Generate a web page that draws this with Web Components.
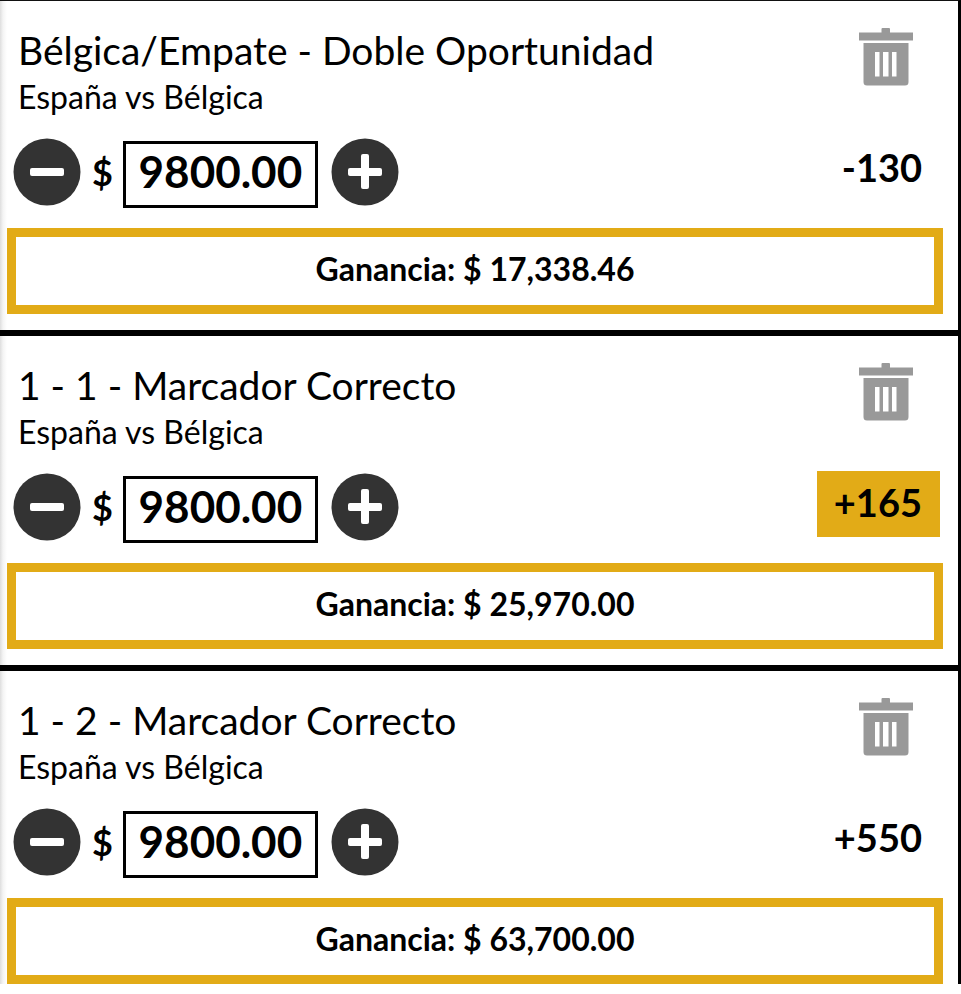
<!DOCTYPE html>
<html lang="es">
<head>
<meta charset="utf-8">
<meta name="viewport" content="width=device-width, initial-scale=1">
<title>Apuestas</title>
<style>
  body {
    min-height: 100vh;
    margin: 0;
    background: #fff;
    color: #000;
    font-family: Lato, "Open Sans", sans-serif;
  }
</style>
</head>
<body>
<bet-slip>
  <bet-card stake="9800.00" odds="-130" payout="17,338.46">
    <span slot="pick">Bélgica/Empate - Doble Oportunidad</span>
    <span slot="match">España vs Bélgica</span>
  </bet-card>
  <bet-card stake="9800.00" odds="+165" payout="25,970.00" highlight>
    <span slot="pick">1 - 1 - Marcador Correcto</span>
    <span slot="match">España vs Bélgica</span>
  </bet-card>
  <bet-card stake="9800.00" odds="+550" payout="63,700.00">
    <span slot="pick">1 - 2 - Marcador Correcto</span>
    <span slot="match">España vs Bélgica</span>
  </bet-card>
</bet-slip>

<script>
const slipTemplate = document.createElement("template");

slipTemplate.innerHTML = `
  <style>
    :host {
      display: block;
      border-top: 1px solid #111;
      border-right: 3px solid #000;
    }
    ::slotted(bet-card:not(:last-child)) {
      border-bottom: 6px solid #000;
      padding-bottom: 16px;
    }
  </style>
  <slot></slot>
`;

class BetSlip extends HTMLElement {
  constructor() {
    super();
    this.attachShadow({ mode: "open" });
    this.shadowRoot.appendChild(slipTemplate.content.cloneNode(true));
  }
}

const stepperTemplate = document.createElement("template");

stepperTemplate.innerHTML = `
  <style>
    :host {
      display: flex;
      align-items: flex-start;
    }
    button {
      width: 68px;
      height: 68px;
      padding: 0;
      border: none;
      background: none;
      cursor: pointer;
    }
    svg {
      display: block;
    }
    label {
      display: flex;
      align-items: flex-start;
      gap: 10px;
      margin: 0 13px 0 11px;
      font-size: 36px;
      font-weight: 700;
      line-height: 68px;
    }
    input {
      box-sizing: border-box;
      width: 195px;
      height: 67px;
      margin: 3px 0 0;
      padding: 0 0 8px;
      border: 3px solid #000;
      border-radius: 0;
      background: #fff;
      color: inherit;
      font: inherit;
      font-size: 44px;
      line-height: 53px;
      text-align: center;
    }
  </style>
  <button type="button" class="minus" aria-label="Menos">
    <svg width="68" height="68" viewBox="0 0 68 68">
      <circle cx="34" cy="34" r="33.5" fill="#333"/>
      <rect x="17" y="30" width="34" height="8" rx="2" fill="#fff"/>
    </svg>
  </button>
  <label><span>$</span><input type="text" inputmode="decimal" aria-label="Monto"></label>
  <button type="button" class="plus" aria-label="Más">
    <svg width="68" height="68" viewBox="0 0 68 68">
      <circle cx="34" cy="34" r="33.5" fill="#333"/>
      <rect x="17" y="30" width="34" height="8" rx="2" fill="#fff"/>
      <rect x="30" y="16" width="8" height="35" rx="2" fill="#fff"/>
    </svg>
  </button>
`;

class StakeStepper extends HTMLElement {
  constructor() {
    super();
    this.attachShadow({ mode: "open" });
    this.shadowRoot.appendChild(stepperTemplate.content.cloneNode(true));
    this.input = this.shadowRoot.querySelector("input");
    this.shadowRoot.querySelector(".minus").addEventListener("click", () => this.change(-100));
    this.shadowRoot.querySelector(".plus").addEventListener("click", () => this.change(100));
  }

  static get observedAttributes() {
    return ["value"];
  }

  attributeChangedCallback(name, oldValue, newValue) {
    this.input.value = newValue;
  }

  change(amount) {
    const next = Math.max(0, (parseFloat(this.input.value) || 0) + amount);
    this.input.value = next.toFixed(2);
  }
}

const cardTemplate = document.createElement("template");

cardTemplate.innerHTML = `
  <style>
    :host {
      display: block;
      padding: 25px 15px 0 7px;
      background: linear-gradient(to right, #dedede, #f4f4f4 3px, #fff 7px);
    }
    .top, .middle {
      display: flex;
      justify-content: space-between;
      align-items: flex-start;
    }
    .names {
      padding-left: 11px;
    }
    h2, p {
      margin: 0;
      font-weight: 400;
    }
    h2 {
      font-size: 39px;
      line-height: 48px;
    }
    p {
      font-size: 32px;
      line-height: 46px;
    }
    .remove {
      margin: 1px 30px 0 0;
      padding: 0;
      border: none;
      background: none;
      cursor: pointer;
    }
    .remove svg {
      display: block;
    }
    .middle {
      margin-top: 16px;
      padding: 0 3px 0 6px;
    }
    stake-stepper {
      margin-top: 2px;
    }
    output {
      box-sizing: border-box;
      min-width: 123px;
      padding: 0 18px 4px 16px;
      font-size: 38px;
      font-weight: 700;
      line-height: 62px;
      text-align: right;
    }
    :host([highlight]) output {
      background: #e2ab17;
    }
    .payout {
      margin-top: 20px;
      padding-bottom: 4px;
      border: 9px solid #e2ab17;
      background: #fff;
      font-size: 32px;
      font-weight: 700;
      line-height: 64px;
      text-align: center;
    }
  </style>
  <div class="top">
    <div class="names">
      <h2><slot name="pick"></slot></h2>
      <p><slot name="match"></slot></p>
    </div>
    <button type="button" class="remove" aria-label="Eliminar">
      <svg width="54" height="60" viewBox="0 0 54 60" fill="#999">
        <path d="M0 5.5H22.5V2Q22.5 1 23.5 1H30Q31 1 31 2V5.5H54V13.500H0Z"/>
        <path fill-rule="evenodd" d="M4.500 16H49.500V55Q49.500 58.500 46 58.500H8Q4.500 58.500 4.500 55ZM16 25V49.500H20.500V25ZM24 25V49.500H29.500V25ZM33 25V49.500H37.500V25Z"/>
      </svg>
    </button>
  </div>
  <div class="middle">
    <stake-stepper></stake-stepper>
    <output></output>
  </div>
  <div class="payout"></div>
`;

class BetCard extends HTMLElement {
  constructor() {
    super();
    this.attachShadow({ mode: "open" });
    this.shadowRoot.appendChild(cardTemplate.content.cloneNode(true));
  }

  connectedCallback() {
    this.render();
  }

  render() {
    const root = this.shadowRoot;
    root.querySelector("stake-stepper").setAttribute("value", this.getAttribute("stake"));
    root.querySelector("output").textContent = this.getAttribute("odds");
    root.querySelector(".payout").textContent = `Ganancia: $ ${this.getAttribute("payout")}`;
  }
}

window.customElements.define("stake-stepper", StakeStepper);
window.customElements.define("bet-card", BetCard);
window.customElements.define("bet-slip", BetSlip);
</script>
</body>
</html>
